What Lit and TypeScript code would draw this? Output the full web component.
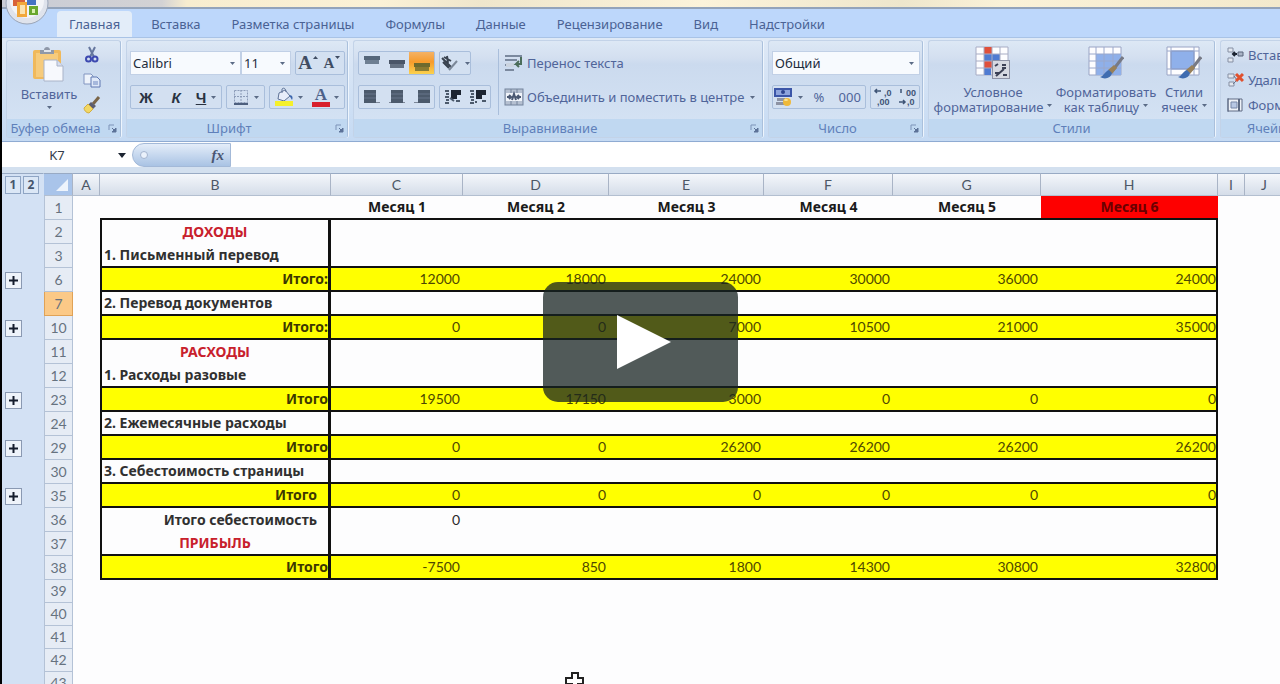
import { LitElement, html, svg, css, nothing } from "lit";
import { customElement, property } from "lit/decorators.js";
import { classMap } from "lit/directives/class-map.js";

const caret = html`<svg class="caret" width="5" height="3" viewBox="0 0 5 3" aria-hidden="true"><path d="M0 0h5L2.5 3z" fill="#5b6b86"/></svg>`;
const icon = (w: number, h: number, body: unknown) =>
  html`<svg width=${w} height=${h} viewBox="0 0 ${w} ${h}" aria-hidden="true">${body}</svg>`;

const brush = svg`<path d="M35 11l-10 13" stroke="#777a86" stroke-width="3"/><path d="M26 19l-6 5 4 4 5-6z" fill="#98805a"/><path d="M21 24c-4 1-5 6-9 7 5 3 11 1 12-4z" fill="#3f6cb0"/>`;

const icons = {
  paste: icon(34, 36, svg`
    <rect x="1" y="4" width="28" height="29" rx="2" fill="#f0b95c"/><rect x="4" y="7" width="22" height="24" fill="#f6cb7c"/>
    <path d="M8 8V4h4c0-4 6-4 6 0h4v4z" fill="#8f98a8"/><rect x="12" y="4" width="7" height="2" fill="#dfe4ec"/>
    <path d="M12 14h13l6 6v15H12z" fill="#f7f9fd" stroke="#a9b3c8"/><path d="M25 14v6h6" fill="#d7deed" stroke="#a9b3c8"/>`),
  cut: icon(18, 18, svg`<path d="M6 1l5 10M12 1L7 11" stroke="#66779e" stroke-width="2" fill="none"/><circle cx="5.500" cy="13" r="2.500" fill="none" stroke="#3d49b0" stroke-width="2"/><circle cx="12" cy="13" r="2.500" fill="none" stroke="#3d49b0" stroke-width="2"/>`),
  copy: icon(18, 18, svg`<path d="M1 3h7l2 2v8H1z" fill="#eef3fb" stroke="#8295c0"/><path d="M8 6h6l3 3v7H8z" fill="#dfe8f8" stroke="#6078b2"/><path d="M10 11h5M10 13h5" stroke="#6e87c0"/>`),
  painter: icon(18, 18, svg`<path d="M16 1l-6 7" stroke="#7a6548" stroke-width="3"/><path d="M8 6l5 4-3 3-5-4z" fill="#5c5d70"/><path d="M5 8l5 5-4 4c-3 0-5-3-5-5z" fill="#f2d764" stroke="#d2ae42"/>`),
  borders: icon(18, 18, svg`<path d="M2.500 2.500h13v12h-13zM9 2v13M2 8.500h13" fill="none" stroke="#8c9cb8" stroke-dasharray="2 1"/><path d="M2 16h14" stroke="#4d5f7e" stroke-width="2"/>`),
  fill: icon(20, 20, svg`<path d="M5 6l6-3 5 6-6 5-6-2z" fill="#e8eefa" stroke="#5f7397"/><path d="M8 6V2c2-2 4 0 4 3" fill="none" stroke="#5f7397"/><path d="M15 8c4 0 4 3 3 5-1-2-2-3-3-5z" fill="#3c66ad"/><rect x="1" y="14" width="18" height="5" fill="#f5f02c"/>`),
  bars: (y: number, dark: string) => icon(18, 18, svg`<rect x="1" y=${y} width="16" height="4" fill=${dark}/><rect x="2" y=${y + 4} width="14" height="4" fill=${dark} opacity=".8"/>`),
  lines: (x: number) => icon(18, 16, svg`<rect x="1" y="13" width="16" height="1" fill="#7c8798"/><rect x=${x} y="1" width="12" height="13" fill="#4c5a6c"/><path d=${`M${x} 5h12M${x} 9h12`} stroke="#66748a"/>`),
  orient: icon(20, 18, svg`<path d="M2 4l9 9M4 3l7 4M3 8l6 6M7 2l1 7" stroke="#39424f" stroke-width="2" fill="none"/><path d="M9 16l8-9" stroke="#7b8798" stroke-width="2"/>`),
  indent: (flip: boolean) => icon(18, 16, svg`<path d="M1 2h4M2 5h3M1 8h4M2 11h3M1 14h4" stroke="#4c5a6c" stroke-width="2"/><path d="M7 1h10v5h-4v4H7z" fill="#1c2431"/><path d=${flip ? "M13 12h4M6 13h2" : "M10 12l-4-3M12 12h4"} stroke="#4c5a6c" stroke-width="2"/>`),
  wrap: icon(20, 20, svg`<path d="M1 3h17M1 7h12M1 12h8M1 17h9" stroke="#7b899e" stroke-width="2"/><rect x="2" y="10" width="8" height="4" fill="#cbd4e0"/><path d="M17 4v7h-5l3-3M12 11l3 3" fill="none" stroke="#4b6d5a" stroke-width="2"/>`),
  merge: icon(20, 18, svg`<rect x="1" y="1" width="18" height="16" fill="#b5c0d1" stroke="#74849c"/><rect x="2" y="5" width="16" height="8" fill="#f0f4fa"/><path d="M3 9h4M5 7l2 2-2 2M17 9h-4M15 7l-2 2 2 2M8 12l2-6 2 6" fill="none" stroke="#4a5872" stroke-width="2"/><path d="M7 1v4M13 1v4M7 13v4M13 13v4" stroke="#74849c"/>`),
  money: icon(20, 20, svg`<rect x="1" y="1" width="18" height="9" fill="#3c56a8"/><rect x="3" y="3" width="14" height="5" fill="#8ea4dc"/><circle cx="10" cy="5" r="2" fill="#2e448e"/><path d="M4 11h8v3H4zM3 15h9v3H3z" fill="#8d93a4"/><ellipse cx="14" cy="15" rx="4" ry="4" fill="#efb93a"/><ellipse cx="13" cy="13" rx="2" ry="1" fill="#fbe595"/>`),
  dec: (more: boolean) => icon(20, 20, svg`<path d=${more ? "M2 4h6M4 2L2 4l2 2" : "M2 15h6M6 13l2 2-2 2M4 2v4"} stroke="#3f5476" stroke-width="1.500" fill="none"/><text x=${more ? 11 : 9} y="9" class="tiny">${more ? ",0" : "00"}</text><text x=${more ? 4 : 10} y="18" class="tiny">${more ? ",00" : ",0"}</text>`),
  cond: icon(36, 34, svg`<path d="M1 1h32v28H1z" fill="#fdfdff" stroke="#a7acc4"/><rect x="9" y="1" width="8" height="7" fill="#e0503c"/><rect x="9" y="8" width="16" height="7" fill="#4f7bd2"/><rect x="9" y="15" width="8" height="7" fill="#e0503c"/><rect x="9" y="22" width="7" height="7" fill="#4f7bd2"/><path d="M9 1v28M17 1v28M25 1v28M1 8h32M1 15h32M1 22h32" stroke="#a7acc4"/><rect x="17.500" y="14.500" width="17" height="18" fill="#d6d9e2" stroke="#8d92a6"/><path d="M20 20l3-2M27 19h4M27 22h4M21 30l8-7M20 27h4M28 29h4" stroke="#3c4156" stroke-width="2"/>`),
  table: icon(36, 34, svg`<path d="M1 1h32v28H1z" fill="#fdfdff" stroke="#9aa4c4"/><path d="M8 8h25v21H8z" fill="#8fb0ea"/><path d="M8 1v28M16 1v28M25 1v28M1 8h32M1 15h32M1 22h32" stroke="#9aa8cc"/>${brush}`),
  styles: icon(36, 34, svg`<path d="M1 1h32v28H1z" fill="#fdfdff" stroke="#9aa4c4"/><path d="M5 5h23v18H5z" fill="#8fb0ea" stroke="#6d88c4"/><path d="M5 1v28M28 1v28M1 5h32M1 23h32" stroke="#9aa8cc"/>${brush}`),
  insert: icon(18, 16, svg`<path d="M2 1h5v4H2zM2 11h5v4H2z" fill="#e3e8f0" stroke="#858fa3"/><path d="M12 5h5v4h-5z" fill="#aab4c6" stroke="#59647a"/><path d="M11 7H7M9 5L7 7l2 2" stroke="#1c2431" fill="none" stroke-width="2"/>`),
  remove: icon(18, 16, svg`<path d="M2 2h6v4H2zM3 10h5v4H3z" fill="#e3e8f0" stroke="#858fa3"/><path d="M8 4l3 4-4 4" stroke="#6a768c" fill="none"/><path d="M10 2l7 7M17 2l-7 7" stroke="#e0512f" stroke-width="3"/>`),
  format: icon(18, 16, svg`<path d="M2 1v14M2 2h14v12H2z" fill="#eef2f8" stroke="#5e6b84"/><path d="M5 5h6v6H5z" fill="#b8c8e4" stroke="#7787a8"/><path d="M13 2v12" stroke="#5e6b84" stroke-width="2"/>`),
};

@customElement("ribbon-group")
class RibbonGroup extends LitElement {
  @property() label = "";
  @property({ type: Boolean }) launcher = false;
  static styles = css`
    :host { display: flex; flex-direction: column; box-sizing: border-box; border: 1px solid #c3d3e8; border-right-color: #aac0dc; border-radius: 3px; box-shadow: 1px 0 0 #eef5fd;
      background: linear-gradient(#dde8f5 0, #d3dff0 18%, #cbdaee 24%, #d6e4f5 100%); }
    .body { flex: 1; display: flex; min-height: 0; }
    .foot { display: flex; align-items: center; height: 18px; background: #c0d8f1; color: #5f80ba; font-size: 13px; }
    .name { flex: 1; text-align: center; white-space: nowrap; }
    .launch { width: 16px; height: 16px; padding: 0; border: 0; background: none; display: grid; place-items: center; }
  `;
  render() {
    return html`<div class="body"><slot></slot></div>
      <div class="foot"><span class="name">${this.label}</span>${this.launcher
        ? html`<button class="launch" aria-label="Параметры: ${this.label}"><svg width="9" height="9" viewBox="0 0 9 9"><path d="M1 6V1h5" fill="none" stroke="#7c93b8"/><path d="M8 4v4H4zM4 4l3 3" fill="#5c7298" stroke="#5c7298"/></svg></button>`
        : nothing}</div>`;
  }
}

@customElement("office-ribbon")
class OfficeRibbon extends LitElement {
  static styles = css`
    :host { display: block; position: relative; }
    button { font: inherit; color: inherit; border: 0; background: none; padding: 0; margin: 0; display: inline-flex; align-items: center; justify-content: center; }
    svg { display: block; flex: none; }
    .title { height: 7px; background: linear-gradient(90deg, #c9ccd6 0, #d3d2d4 160px, #f8edcf 185px, #fbf1d6 380px, #efe6cc 480px, #fcf3da 700px, #eee6cc 900px, #fbf2d8 1000px, #f3e9cc 100%); border-bottom: 2px solid #93a3ba; }
    .orb { position: absolute; left: 3px; top: -19px; }
    .tabs { display: flex; align-items: stretch; gap: 7px; height: 28px; padding: 2px 0 0 55px; box-sizing: border-box; background: #bdd7fb; color: #4a6294; font-size: 13px; }
    .tab { padding: 0 12px; white-space: nowrap; border-radius: 4px 4px 0 0; }
    .tab.on { background: #e3edf9; }
    .groups { display: flex; gap: 5px; height: 105px; box-sizing: border-box; padding: 2px 0 3px 4px; background: linear-gradient(#dfe9f6, #c5daf3); border-top: 1px solid #a9c3e6; border-bottom: 1px solid #8fabd2; color: #50659a; font-size: 13px; overflow: hidden; }
    ribbon-group { flex: none; }
    .clip { width: 115px; } .font { width: 222px; } .align { width: 410px; } .num { width: 155px; } .style { width: 287px; } .cells { width: 100px; }
    .big { flex-direction: column; justify-content: flex-start; line-height: 15px; text-align: center; white-space: nowrap; padding-top: 5px; }
    .big svg:first-child { margin-bottom: 5px; }
    .big .t { display: flex; align-items: center; gap: 4px; }
    .paste { width: 76px; padding-left: 8px; }
    .paste .caret { margin-top: 4px; }
    .side { display: flex; flex-direction: column; gap: 7px; padding-top: 5px; }
    .rows { display: flex; flex-direction: column; gap: 10px; padding: 10px 2px 0 3px; flex: 1; }
    .row { display: flex; gap: 4px; height: 24px; }
    .set { display: flex; align-items: stretch; border: 1px solid #a9bedb; border-radius: 2px; background: #d3e0f1; box-sizing: border-box; }
    .set button { flex: 1 0 24px; gap: 5px; }
    .set.drop button { flex-basis: 37px; gap: 4px; }
    .narrow .set button { flex-basis: 25px; }
    .set .on { background: linear-gradient(#f4b266, #f79b2c 45%, #fbd24e); }
    .box { position: relative; display: flex; align-items: center; background: #f7fafe; border: 1px solid #c1d0e6; box-sizing: border-box; }
    .box select { appearance: none; border: 0; background: none; width: 100%; height: 100%; padding: 0 2px; color: #222c3c; font: 13px "Noto Sans", sans-serif; }
    .box .caret { position: absolute; right: 5px; }
    .joined { display: flex; flex: 1; }
    .face { flex: 1; } .size { width: 50px; }
    .b { font: bold 15px "Liberation Sans", sans-serif; color: #2a3342; }
    .i { font-style: italic; }
    .u { text-decoration: underline; }
    .serif { font: bold 19px "Liberation Serif", serif; color: #3f4c63; }
    .serif.small { font-size: 15px; }
    .mark { align-self: flex-start; margin: 4px 0 0 -4px; }
    .red { display: flex; flex-direction: column; align-items: center; font: bold 17px/14px "Liberation Serif", serif; color: #4d618a; }
    .red i { width: 18px; height: 5px; background: #d81f2c; }
    .narrow { flex: none; width: 138px; padding-left: 4px; }
    .sep { width: 1px; margin: 8px 0 4px; background: #a9bedb; }
    .wide { display: flex; flex-direction: column; gap: 10px; padding: 10px 0 0 5px; align-items: flex-start; }
    .wide button { height: 24px; gap: 3px; white-space: nowrap; }
    .wide .caret { margin-left: 3px; }
    .tiny { font: bold 9px "Liberation Sans", sans-serif; fill: #3f5476; }
    .w1 { width: 128px; } .w2 { width: 98px; } .w3 { width: 58px; }
    .list { display: flex; flex-direction: column; gap: 9px; padding: 6px 0 0 5px; align-items: flex-start; }
    .list button { gap: 4px; height: 16px; white-space: nowrap; }
  `;
  render() {
    const tabs = ["Главная", "Вставка", "Разметка страницы", "Формулы", "Данные", "Рецензирование", "Вид", "Надстройки"];
    return html`
      <div class="title"></div>
      <nav class="tabs">${tabs.map((t, i) => html`<button class=${classMap({ tab: true, on: i === 0 })}>${t}</button>`)}</nav>
      <svg class="orb" width="44" height="44" viewBox="0 0 44 44" aria-hidden="true">
        <circle cx="22" cy="22" r="21" fill="#dfe3ec" stroke="#9aa5b8"/><circle cx="22" cy="20" r="17" fill="#f3f4f8"/>
        <path d="M8 17h12v8H8z" fill="#d9633a"/><path d="M12 21h10v15H12z" fill="#f2a83b"/><path d="M15 24h5v9h-5z" fill="#fae3b2"/><path d="M22 15h9v9h-9z" fill="#4472c4"/><path d="M24 25h9v9h-9z" fill="#6aa82f"/><path d="M27 28h3v4h-3z" fill="#d8efb0"/>
      </svg>
      <div class="groups">
        <ribbon-group class="clip" label="Буфер обмена" launcher>
          <button class="big paste">${icons.paste}<span>Вставить</span>${caret}</button>
          <div class="side">
            <button aria-label="Вырезать">${icons.cut}</button>
            <button aria-label="Копировать">${icons.copy}</button>
            <button aria-label="Формат по образцу">${icons.painter}</button>
          </div>
        </ribbon-group>
        <ribbon-group class="font" label="Шрифт" launcher>
          <div class="rows">
            <div class="row">
              <div class="joined">
                <label class="box face"><select aria-label="Шрифт"><option>Calibri</option></select>${caret}</label>
                <label class="box size"><select aria-label="Размер шрифта"><option>11</option></select>${caret}</label>
              </div>
              <div class="set">
                <button aria-label="Увеличить размер"><span class="serif">A</span><svg class="mark" width="5" height="3"><path d="M0 3h5L2.500 0z" fill="#3f4c63"/></svg></button>
                <button aria-label="Уменьшить размер"><span class="serif small">A</span><svg class="mark" width="5" height="3"><path d="M0 0h5L2.500 3z" fill="#3f4c63"/></svg></button>
              </div>
            </div>
            <div class="row">
              <div class="set joined"><button class="b">Ж</button><button class="b i">К</button><button class="b"><span class="u">Ч</span>${caret}</button></div>
              <div class="set drop"><button aria-label="Границы">${icons.borders}${caret}</button></div>
              <div class="set drop"><button aria-label="Цвет заливки">${icons.fill}${caret}</button><button aria-label="Цвет текста"><span class="red">A<i></i></span>${caret}</button></div>
            </div>
          </div>
        </ribbon-group>
        <ribbon-group class="align" label="Выравнивание" launcher>
          <div class="rows narrow">
            <div class="row">
              <div class="set"><button aria-label="По верхнему краю">${icons.bars(2, "#55667a")}</button><button aria-label="Посередине">${icons.bars(6, "#4a5668")}</button><button class="on" aria-label="По нижнему краю">${icons.bars(9, "#6e6a2e")}</button></div>
              <div class="set"><button aria-label="Ориентация">${icons.orient}${caret}</button></div>
            </div>
            <div class="row">
              <div class="set"><button aria-label="По левому краю">${icons.lines(1)}</button><button aria-label="По центру">${icons.lines(3)}</button><button aria-label="По правому краю">${icons.lines(5)}</button></div>
              <div class="set"><button aria-label="Уменьшить отступ">${icons.indent(false)}</button><button aria-label="Увеличить отступ">${icons.indent(true)}</button></div>
            </div>
          </div>
          <div class="sep"></div>
          <div class="wide"><button>${icons.wrap}Перенос текста</button><button>${icons.merge}Объединить и поместить в центре${caret}</button></div>
        </ribbon-group>
        <ribbon-group class="num" label="Число" launcher>
          <div class="rows">
            <div class="row"><label class="box face"><select aria-label="Числовой формат"><option>Общий</option></select>${caret}</label></div>
            <div class="row">
              <div class="set joined"><button aria-label="Финансовый формат">${icons.money}${caret}</button><button>%</button><button>000</button></div>
              <div class="set"><button aria-label="Увеличить разрядность">${icons.dec(true)}</button><button aria-label="Уменьшить разрядность">${icons.dec(false)}</button></div>
            </div>
          </div>
        </ribbon-group>
        <ribbon-group class="style" label="Стили">
          <button class="big w1">${icons.cond}<span>Условное</span><span class="t">форматирование${caret}</span></button>
          <button class="big w2">${icons.table}<span>Форматировать</span><span class="t">как таблицу${caret}</span></button>
          <button class="big w3">${icons.styles}<span>Стили</span><span class="t">ячеек${caret}</span></button>
        </ribbon-group>
        <ribbon-group class="cells" label="Ячейки">
          <div class="list"><button>${icons.insert}Вставить${caret}</button><button>${icons.remove}Удалить${caret}</button><button>${icons.format}Формат${caret}</button></div>
        </ribbon-group>
      </div>`;
  }
}

type Row = { n: number; kind?: "head" | "item" | "total" | "indent"; label?: string; values?: number[]; line?: boolean; plus?: boolean; fill?: boolean };
const rows: Row[] = [
  { n: 2, kind: "head", label: "ДОХОДЫ" },
  { n: 3, kind: "item", label: "1. Письменный перевод", line: true },
  { n: 6, kind: "total", label: "Итого:", values: [12000, 18000, 24000, 30000, 36000, 24000], line: true, plus: true, fill: true },
  { n: 7, kind: "item", label: "2. Перевод документов", line: true },
  { n: 10, kind: "total", label: "Итого:", values: [0, 0, 7000, 10500, 21000, 35000], line: true, plus: true, fill: true },
  { n: 11, kind: "head", label: "РАСХОДЫ" },
  { n: 12, kind: "item", label: "1. Расходы разовые", line: true },
  { n: 23, kind: "total", label: "Итого", values: [19500, 17150, 3000, 0, 0, 0], line: true, plus: true, fill: true },
  { n: 24, kind: "item", label: "2. Ежемесячные расходы", line: true },
  { n: 29, kind: "total", label: "Итого", values: [0, 0, 26200, 26200, 26200, 26200], line: true, plus: true, fill: true },
  { n: 30, kind: "item", label: "3. Себестоимость страницы", line: true },
  { n: 35, kind: "indent", label: "Итого", values: [0, 0, 0, 0, 0, 0], line: true, plus: true, fill: true },
  { n: 36, kind: "indent", label: "Итого себестоимость", values: [0] },
  { n: 37, kind: "head", label: "ПРИБЫЛЬ", line: true },
  { n: 38, kind: "total", label: "Итого", values: [-7500, 850, 1800, 14300, 30800, 32800], line: true, fill: true },
];

@customElement("work-sheet")
class WorkSheet extends LitElement {
  static styles = css`
    :host { display: block; background: linear-gradient(90deg, #d3e1f4 42px, #fdfdfe 42px); font: 14px Lato, "Open Sans", sans-serif; color: #2a2a2a; }
    table { table-layout: fixed; width: 100%; border-collapse: separate; border-spacing: 0; }
    .c0 { width: 42px; } .cn { width: 29px; } .ca { width: 27px; } .cb { width: 231px; } .cc { width: 132px; } .cd { width: 146px; } .ce { width: 155px; } .cf { width: 129px; } .cg { width: 148px; } .ch { width: 177px; } .ci { width: 27px; }
    th, td { box-sizing: border-box; padding: 0; height: 24px; line-height: 18px; overflow: hidden; white-space: nowrap; }
    thead th { height: 23px; font-weight: normal; color: #4d5766; background: linear-gradient(#f4f7fb, #d5dde9); border-right: 1px solid #a9b4c6; border-bottom: 1px solid #b3bfd0; border-top: 1px solid #98aac4; }
    thead th.last { text-align: left; padding-left: 16px; border-right: 0; }
    thead .levels { background: #d3e1f4; border-color: #98aac4 transparent transparent; }
    .lv { display: flex; gap: 2px; padding-left: 3px; }
    button { font: bold 12px "Noto Sans", sans-serif; color: #45546c; padding: 0; box-sizing: border-box; width: 16px; height: 18px; line-height: 14px; border: 1px solid #8fa5c4; background: #dbe7f6; display: grid; place-items: center; }
    .plus { height: 17px; width: 17px; margin-left: 3px; border-color: #8a99b2; background: #eef3fa; }
    thead .corner { background: #a9c4ea; }
    .corner svg { display: block; margin-left: auto; margin-right: 4px; }
    .num { font-weight: normal; color: #66727f; background: #e6ecf5; border: 0 solid #b4c2d6; border-width: 0 1px 1px; }
    .num.cur { background: #fbc987; border-color: #e0a256; }
    .month, .b { font: bold 14px/18px "Noto Sans", sans-serif; }
    .month { text-align: center; color: #1a1a1a; border-bottom: 2px solid #111; }
    .red { background: #fe0000; color: #6a0000; }
    .b { text-align: left; border: 0 solid #111; border-width: 0 3px 0 2px; color: #303030; }
    .line { border-bottom: 2px solid #111; }
    .head { text-align: center; color: #c8202c; }
    .item { padding-left: 2px; }
    .total { text-align: right; }
    .indent { text-align: right; padding-right: 11px; }
    .v { text-align: right; padding-right: 3px; }
    .v.h { border-right: 2px solid #111; padding-right: 0; }
    .fill .b, .fill .v { background: #ffff00; }
    .fill .v { color: #4e4700; } .fill .b { color: #3d3800; }
    .tail th, .tail td { height: 23px; }
  `;
  render() {
    const months = [1, 2, 3, 4, 5, 6];
    return html`<table>
      <colgroup><col class="c0"><col class="cn"><col class="ca"><col class="cb"><col class="cc"><col class="cd"><col class="ce"><col class="cf"><col class="cg"><col class="ch"><col class="ci"><col></colgroup>
      <thead><tr><th class="levels"><div class="lv"><button>1</button><button>2</button></div></th>
        <th class="corner"><svg width="12" height="12"><path d="M12 0v12H0z" fill="#eef4fc"/></svg></th>
        ${["A", "B", "C", "D", "E", "F", "G", "H", "I"].map((c) => html`<th>${c}</th>`)}<th class="last">J</th></tr></thead>
      <tbody>
        <tr><td></td><th class="num">1</th><td></td><td class="month"></td>${months.map((m) => html`<th class=${classMap({ month: true, red: m === 6 })}>Месяц ${m}</th>`)}<td></td><td></td></tr>
        ${rows.map((r) => html`<tr class=${classMap({ fill: !!r.fill })}>
          <td>${r.plus ? html`<button class="plus" aria-label="Развернуть"><svg width="9" height="9"><path d="M4.500 0v9M0 4.500h9" stroke="#141c2c" stroke-width="2"/></svg></button>` : nothing}</td>
          <th class=${classMap({ num: true, cur: r.n === 7 })}>${r.n}</th><td></td>
          <th class=${classMap({ b: true, line: !!r.line, [r.kind ?? "item"]: true })}>${r.label}</th>
          ${months.map((_, i) => html`<td class=${classMap({ v: true, line: !!r.line, h: i === 5 })}>${r.values?.[i] ?? nothing}</td>`)}
          <td></td><td></td></tr>`)}
        ${[39, 40, 41, 42, 43].map((n) => html`<tr class="tail"><td></td><th class="num">${n}</th><td colspan="10"></td></tr>`)}
      </tbody></table>`;
  }
}

@customElement("app-root")
class AppRoot extends LitElement {
  static styles = css`
    :host { display: flex; flex-direction: column; position: relative; box-sizing: border-box; height: 100vh; overflow: hidden; padding-left: 2px; background: linear-gradient(90deg, #000 2px, #fdfdfe 2px); font: 12px "Noto Sans", "Open Sans", sans-serif; }
    office-ribbon { flex: none; }
    work-sheet { flex: 1; min-height: 0; overflow: hidden; }
    .formula { flex: none; display: flex; height: 24px; margin-top: 1px; background: #fff; border-bottom: 6px solid #d3e0ef; }
    .name { position: relative; display: flex; align-items: center; width: 130px; }
    .name input { width: 110px; border: 0; background: none; padding: 0; text-align: center; font: 13px "Noto Sans", sans-serif; color: #333c4a; }
    .name svg { position: absolute; right: 6px; }
    .fx { flex: none; width: 99px; height: 24px; box-sizing: border-box; padding: 0 6px; border: 1px solid #a3b9d8; border-radius: 12px 0 0 12px; background: linear-gradient(#e4edf9, #a9c3e4); display: flex; align-items: center; justify-content: space-between; font: italic bold 15px "Liberation Serif", serif; color: #4a5672; }
    .line { flex: 1; min-width: 0; border: 0; background: none; padding: 0 6px; }
    .play { position: absolute; inset: 0; margin: auto; width: 195px; height: 120px; padding: 0 0 0 8px; border: 0; border-radius: 15px; background: rgba(23, 35, 34, .75); display: grid; place-items: center; }
    .play svg { display: block; }
    .cursor { position: absolute; left: 565px; bottom: -8px; }
  `;
  render() {
    return html`
      <office-ribbon></office-ribbon>
      <div class="formula">
        <label class="name"><input aria-label="Имя" value="K7"><svg width="8" height="5"><path d="M0 0h8L4 5z" fill="#1c2431"/></svg></label>
        <button class="fx" aria-label="Вставить функцию"><svg width="11" height="11"><circle cx="5" cy="5" r="3.500" fill="#eaf1fb" stroke="#a3b4cf"/></svg><span>fx</span></button>
        <input class="line" aria-label="Строка формул">
      </div>
      <work-sheet></work-sheet>
      <button class="play" aria-label="Воспроизвести"><svg width="54" height="54"><path d="M0 0l54 27L0 54z" fill="#fff"/></svg></button>
      <svg class="cursor" width="20" height="20" viewBox="0 0 20 20" aria-hidden="true"><path d="M7 1h6v5h5v6h-5v5H7v-5H1V6h6z" fill="#fff" stroke="#222" stroke-width="2"/></svg>`;
  }
}
